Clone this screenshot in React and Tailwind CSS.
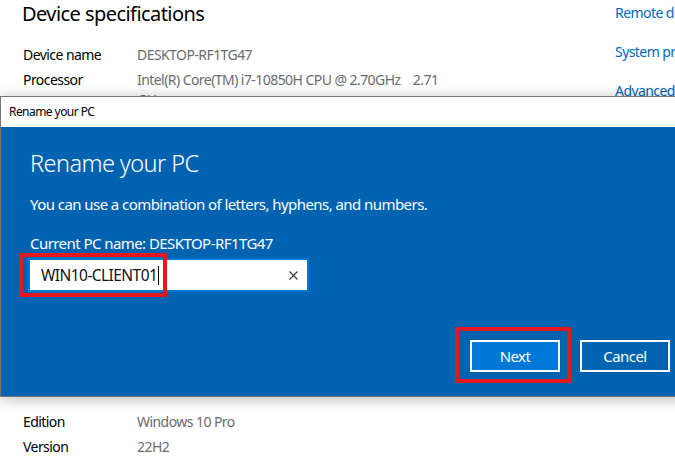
export default function App() {
  return (
    <div className="relative w-[675px] h-[462px] overflow-hidden bg-white font-['Noto_Sans','Liberation_Sans',sans-serif] tracking-[-0.035em] text-black">
      {/* Background settings page */}
      <div className="flex">
        <div className="w-[615px] shrink-0 pl-[22px]">
          <h1 className="text-[20px] leading-[28px] font-normal">Device specifications</h1>
          <div className="mt-[17px] flex flex-col gap-[5px] text-[14px] leading-[20px]">
            <div className="flex">
              <div className="w-[115px] shrink-0 pl-px">Device name</div>
              <div className="text-[#6b6b6b]">DESKTOP-RF1TG47</div>
            </div>
            <div className="flex">
              <div className="w-[115px] shrink-0 pl-px">Processor</div>
              <div className="text-[#6b6b6b] whitespace-pre">
                {"Intel(R) Core(TM) i7-10850H CPU @ 2.70GHz    2.71"}
                <br />
                {"GHz"}
              </div>
            </div>
            <div className="h-[292px]" />
            <div className="flex">
              <div className="w-[115px] shrink-0 pl-px">Edition</div>
              <div className="text-[#6b6b6b]">Windows 10 Pro</div>
            </div>
            <div className="flex">
              <div className="w-[115px] shrink-0 pl-px">Version</div>
              <div className="text-[#6b6b6b]">22H2</div>
            </div>
          </div>
        </div>
        <div className="pt-[3px] flex flex-col gap-[19px] text-[14px] leading-[20px] whitespace-nowrap text-[#0067c0]">
          <div>Remote desktop</div>
          <div>System protection</div>
          <div>Advanced system settings</div>
        </div>
      </div>

      {/* Dialog */}
      <div className="absolute left-0 top-[96px] w-[700px] h-[301px] flex flex-col border border-[#767676] shadow-[0_2px_14px_rgba(0,0,0,0.28)]">
        <div className="h-[30px] shrink-0 bg-white flex items-center pl-[8px] text-[12px] text-black">
          Rename your PC
        </div>
        <div className="flex-1 bg-[#0063b1] px-[29px] pt-[20px] pb-[24px] flex flex-col text-white">
          <h2 className="text-[23.5px] leading-[32px] font-light">Rename your PC</h2>
          <p className="mt-[15px] text-[15px] leading-[20px]">
            You can use a combination of letters, hyphens, and numbers.
          </p>
          <div className="mt-[19px] text-[15px] leading-[20px]">Current PC name: DESKTOP-RF1TG47</div>
          <div className="mt-[5px] -ml-[2px] w-[281px] h-[34px] border-2 border-[#0078d7] bg-white flex items-center pl-[11px] pr-[9px]">
            <span className="text-[15.5px] leading-[20px] text-[#111]">WIN10-CLIENT01</span>
            <span className="inline-block w-px h-[19px] bg-black ml-[1px]" />
            <div className="flex-1" />
            <svg width="9" height="9" viewBox="0 0 9 9" className="shrink-0">
              <path d="M0.5 0.5 L8.5 8.5 M8.5 0.5 L0.5 8.5" stroke="#333" strokeWidth="1.1" fill="none" />
            </svg>
          </div>
          <div className="mt-auto flex justify-end gap-[20px]">
            <button className="w-[90px] h-[32px] border-2 border-white bg-[#0078d7] text-[15px] text-white">
              Next
            </button>
            <button className="w-[90px] h-[32px] border-2 border-white bg-transparent text-[15px] text-white">
              Cancel
            </button>
          </div>
        </div>
      </div>

      {/* Red annotation boxes */}
      <div className="absolute left-[19px] top-[253px] w-[148px] h-[44px] border-4 border-[#e3191f]" />
      <div className="absolute left-[455px] top-[327px] w-[116px] h-[56px] border-4 border-[#e3191f]" />
    </div>
  );
}
